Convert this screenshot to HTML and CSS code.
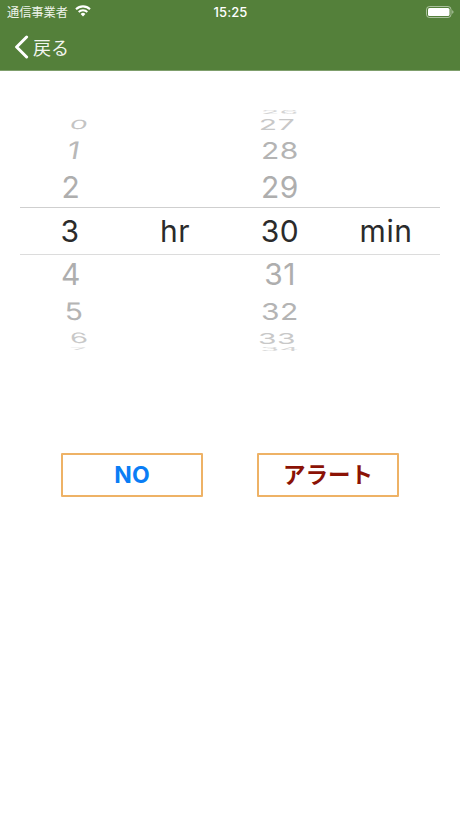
FILE: index.html
```html
<!DOCTYPE html>
<html lang="ja">
<head>
<meta charset="utf-8">
<title>アラート</title>
<link rel="stylesheet" href="styles.css">
</head>
<body>
<header class="header">
  <div class="status">
    <div class="status-left">
      <span class="carrier">通信事業者</span>
      <svg class="wifi" viewBox="0 0 16 12" width="16" height="12"><path d="M8 11.6 5.6 9a3.4 3.4 0 0 1 4.8 0Z" fill="#fff"/><path d="M4.3 7.7 3 6.3a7 7 0 0 1 10 0l-1.3 1.4a5.2 5.2 0 0 0-7.4 0Z" fill="#fff"/><path d="M1.7 5 .3 3.6a10.8 10.8 0 0 1 15.4 0L14.3 5a8.9 8.9 0 0 0-12.6 0Z" fill="#fff"/></svg>
    </div>
    <span class="time">15:25</span>
    <div class="status-right">
      <svg class="battery" viewBox="0 0 28 12" width="28" height="12"><rect x=".5" y=".5" width="24.5" height="11" rx="3" fill="none" stroke="#fff" stroke-opacity=".5"/><rect x="2" y="2" width="21.5" height="8" rx="1.6" fill="#fff"/><path d="M26.2 4.2c.9.3 1.3 1 1.3 1.8s-.4 1.5-1.3 1.8Z" fill="#fff" fill-opacity=".5"/></svg>
    </div>
  </div>
  <nav class="nav">
    <svg class="chevron" viewBox="0 0 15 24" width="15" height="24"><path d="M12.6 2 2.6 12l10 10" fill="none" stroke="#fff" stroke-width="3" stroke-linecap="round" stroke-linejoin="round"/></svg>
    <span class="back">戻る</span>
  </nav>
</header>
<main>
  <section class="picker">
    <div class="row h6"><span class="cell"></span><span class="cell"></span><span class="cell c3 far4">26</span><span class="cell"></span></div>
    <div class="row h18"><span class="cell l0">0</span><span class="cell"></span><span class="cell c3 far3 m27">27</span><span class="cell"></span></div>
    <div class="row h34"><span class="cell l1">1</span><span class="cell"></span><span class="cell c3 far2">28</span><span class="cell"></span></div>
    <div class="row h40"><span class="cell l2">2</span><span class="cell"></span><span class="cell c3 far1">29</span><span class="cell"></span></div>
    <div class="row selected"><span class="cell">3</span><span class="cell">hr</span><span class="cell">30</span><span class="cell cell-min">min</span></div>
    <div class="row h38"><span class="cell l4">4</span><span class="cell"></span><span class="cell c3 far1">31</span><span class="cell"></span></div>
    <div class="row h36"><span class="cell l5">5</span><span class="cell"></span><span class="cell c3 far2">32</span><span class="cell"></span></div>
    <div class="row h18"><span class="cell l6">6</span><span class="cell"></span><span class="cell c3 far3 m33">33</span><span class="cell"></span></div>
    <div class="row h4"><span class="cell l7">7</span><span class="cell"></span><span class="cell c3 far4">34</span><span class="cell"></span></div>
  </section>
  <section class="actions">
    <button class="btn btn-no" type="button">NO</button>
    <button class="btn btn-alert" type="button">アラート</button>
  </section>
</main>
</body>
</html>
```
FILE: styles.css
```css
* { box-sizing: border-box; }
html, body { margin: 0; padding: 0; background: #fff; }
body { width: 460px; height: 818px; overflow: hidden; font-family: Inter, "Noto Sans CJK JP", sans-serif; }

.header { height: 71px; background: #54803a; border-bottom: 1px solid #7f9f6c; color: #fff; }
.status { height: 24px; display: grid; grid-template-columns: 1fr auto 1fr; align-items: center; padding: 0 6px 0 7px; }
.status-left { display: flex; align-items: center; gap: 7px; }
.carrier { font: 400 12.2px/16px "Noto Sans CJK JP", sans-serif; color: #eef3ea; }
.wifi { display: block; margin-top: -2px; }
.time { font: 500 13px/16px Inter, sans-serif; letter-spacing: .1px; }
.status-right { display: flex; justify-content: flex-end; }
.battery { display: block; }
.nav { height: 46px; display: flex; align-items: center; padding: 0 0 0 14px; gap: 4px; }
.chevron { display: block; margin-top: -1px; }
.back { font: 400 18px/24px "Noto Sans CJK JP", sans-serif; color: #f2f5ef; margin-top: -1px; }

.picker { margin: 38px 20px 0; width: 420px; }
.row { display: grid; grid-template-columns: repeat(4, 105px); grid-template-rows: 100%; }
.cell { display: flex; align-items: center; justify-content: center; padding-right: 5px; min-height: 0; font-size: 30px; line-height: 30px; letter-spacing: .5px; color: #aeaeae; }
.cell-min { padding-right: 3px; }

.h4 { height: 4px; } .h6 { height: 6px; } .h18 { height: 18px; } .h34 { height: 34px; }
.h36 { height: 36px; } .h38 { height: 38px; } .h40 { height: 40px; }

.selected { height: 48px; border-top: 1px solid #cfcfcf; border-bottom: 1px solid #dcdcdc; }
.selected .cell { color: #2b2b2b; }

.far1 { transform: scaleY(.98); }
.far2 { transform: scaleY(.78); color: #b4b4b4; }
.far3 { transform: scaleY(.5); color: #c8c8c8; }
.m27 { transform: translateX(-3px) scaleY(.5); }
.m33 { transform: translateX(-3px) scaleY(.5); }
.far4 { transform: scaleY(.14); color: #d4d4d4; }

.l0 { transform: translateX(9px) skewX(-14deg) scale(.95, .42); color: #c4c4c4; }
.l1 { transform: translateX(4px) skewX(-10deg) scaleY(.8); color: #b8b8b8; }
.l2 { transform: translateX(1px) scaleY(.98); }
.l4 { transform: translateX(1px) scaleY(.98); }
.l5 { transform: translateX(4px) skewX(3deg) scaleY(.8); color: #b4b4b4; }
.l6 { transform: translateX(9px) skewX(10deg) scale(.95, .48); color: #c8c8c8; }
.l7 { transform: translateX(9px) skewX(25deg) scaleY(.12); color: #d4d4d4; }

.actions { display: flex; gap: 54px; margin: 102px 0 0 61px; }
.btn { width: 142px; height: 44px; padding: 0; background: #fff; border: 2px solid #eeb266; border-radius: 1px; font: 700 22.5px/26px Inter, "Noto Sans CJK JP", sans-serif; display: flex; align-items: center; justify-content: center; }
.btn-no { color: #0a7df5; font-size: 23px; }
.btn-alert { color: #8b1205; }
```
